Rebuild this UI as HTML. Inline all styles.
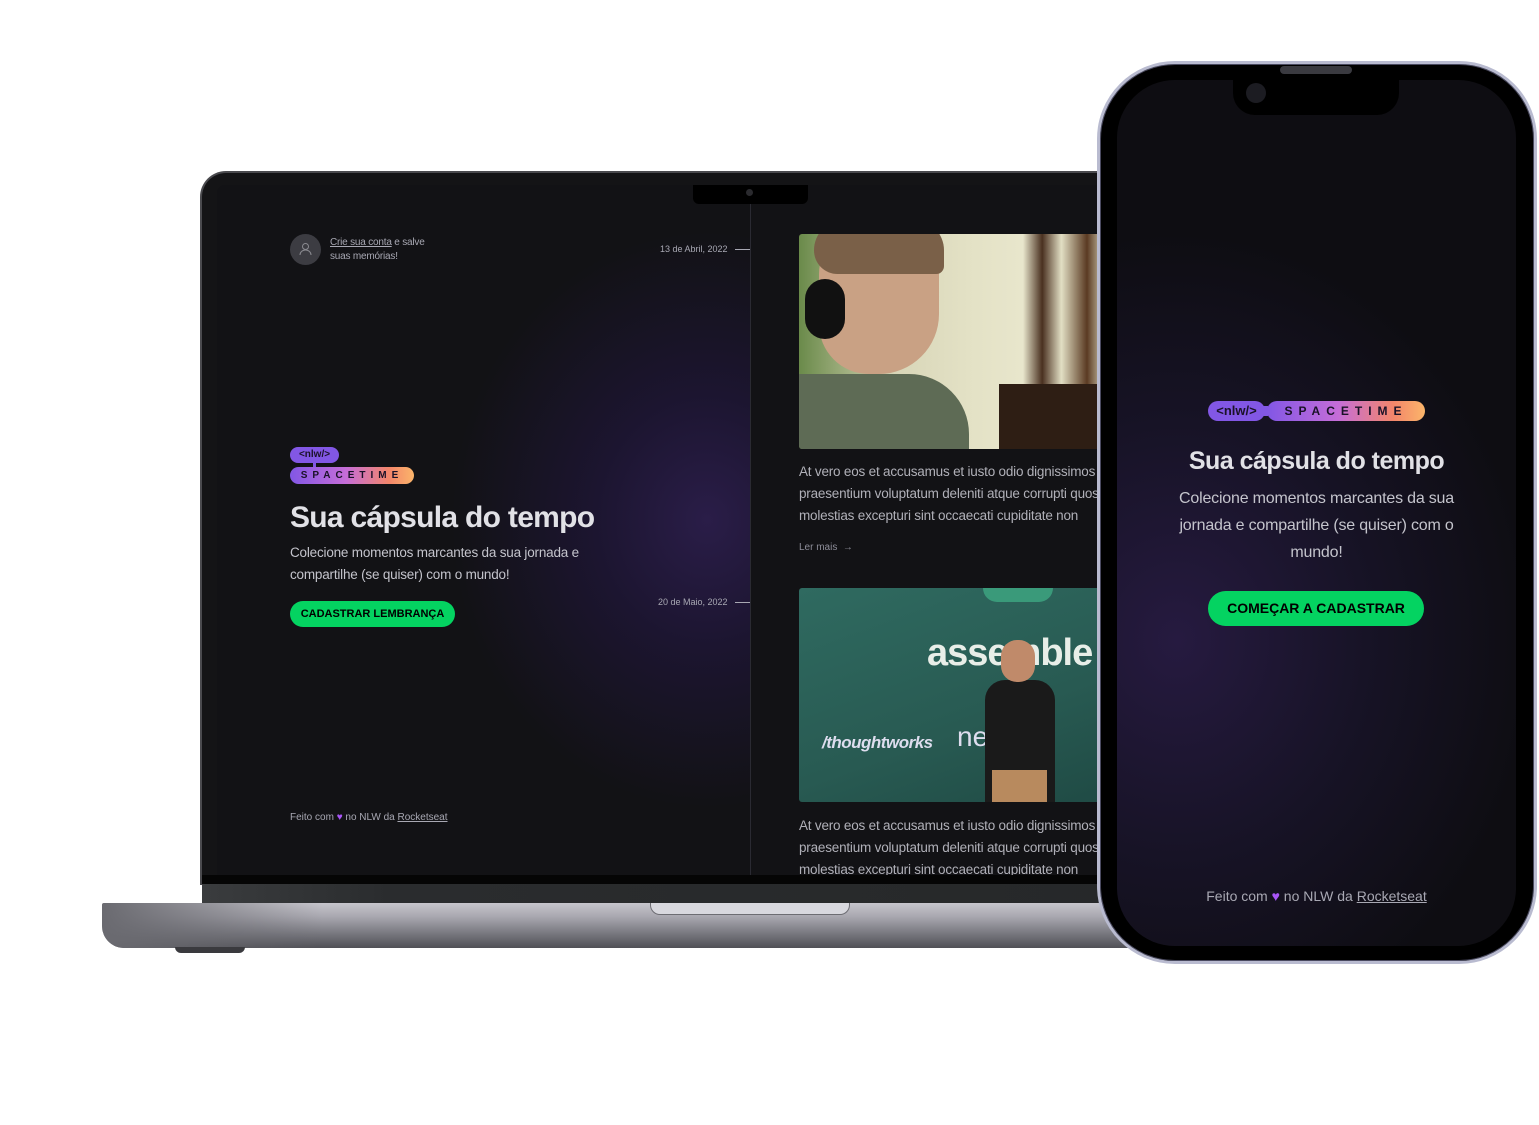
<!DOCTYPE html>
<html><head><meta charset="utf-8"><style>
*{margin:0;padding:0;box-sizing:border-box}
body{width:1539px;height:1125px;background:#fff;position:relative;overflow:hidden;font-family:"Liberation Sans",sans-serif}
.abs{position:absolute}
.logo1{background:#8257e5;color:#1a1228;border-radius:9px;font-weight:bold;text-align:center}
.logo2{background:linear-gradient(90deg,#8257e5,#c56dd8 45%,#f3866a 80%,#fbb56a);color:#1a1228;border-radius:9px;font-weight:bold;text-align:center}
.t{color:#e1e1e6}
.g{color:#a8a8b3}
</style></head><body>

<div class="abs" style="left:200px;top:171px;width:940px;height:714px;background:#141416;border-radius:26px 26px 0 0;border:2px solid #4a4a4e;border-bottom:none"></div>
<div class="abs" style="left:217px;top:185px;width:900px;height:690px;background:#121215;overflow:hidden;border-radius:8px 0 0 0">
  <div class="abs" style="left:0;top:0;width:533px;height:690px;background:radial-gradient(ellipse 320px 360px at 490px 335px,#2a1d48 0%,#1c1530 35%,#121215 80%)"></div>
  <div class="abs" style="left:533px;top:0;width:1px;height:690px;background:#2a2a32"></div>
  <div class="abs" style="left:476px;top:0;width:115px;height:19px;background:#000;border-radius:0 0 6px 6px"></div>
  <div class="abs" style="left:529px;top:4px;width:7px;height:7px;background:#2a2a2e;border-radius:50%"></div>
  <div class="abs" style="left:73px;top:49px;width:31px;height:31px;border-radius:50%;background:#3c3c42"></div>
  <svg class="abs" style="left:82px;top:57px" width="13" height="14" viewBox="0 0 13 14"><circle cx="6.5" cy="4.5" r="3" fill="none" stroke="#8a8a90" stroke-width="1"/><path d="M1 13c0-3 2.5-5 5.5-5s5.5 2 5.5 5" fill="none" stroke="#8a8a90" stroke-width="1"/></svg>
  <div class="abs g" style="left:113px;top:51px;font-size:10px;line-height:14px;letter-spacing:-0.2px"><u>Crie sua conta</u> e salve<br>suas memórias!</div>
  <div class="abs g" style="left:443px;top:59px;font-size:9px">13 de Abril, 2022</div>
  <div class="abs" style="left:518px;top:64px;width:15px;height:1px;background:#a8a8b3"></div>
  <div class="abs g" style="left:441px;top:412px;font-size:9px">20 de Maio, 2022</div>
  <div class="abs" style="left:518px;top:417px;width:15px;height:1px;background:#a8a8b3"></div>
  <div class="abs logo1" style="left:73px;top:262px;width:49px;height:16px;font-size:10px;line-height:16px">&lt;nlw/&gt;</div>
  <div class="abs" style="left:96px;top:277px;width:3px;height:5px;background:#8257e5"></div>
  <div class="abs logo2" style="left:73px;top:282px;width:124px;height:17px;font-size:10px;line-height:17px;letter-spacing:5px">SPACETIME</div>
  <div class="abs t" style="left:73px;top:316px;font-size:30px;font-weight:bold;letter-spacing:-0.7px">Sua cápsula do tempo</div>
  <div class="abs g" style="left:73px;top:357px;font-size:13.5px;line-height:22px;color:#c4c4cc;letter-spacing:-0.2px">Colecione momentos marcantes da sua jornada e<br>compartilhe (se quiser) com o mundo!</div>
  <div class="abs" style="left:73px;top:416px;width:165px;height:26px;background:#04d361;border-radius:13px;color:#000;font-size:11px;font-weight:bold;text-align:center;line-height:26px">CADASTRAR LEMBRANÇA</div>
  <div class="abs g" style="left:73px;top:627px;font-size:10px">Feito com <span style="color:#a855f7">♥</span> no NLW da <u>Rocketseat</u></div>
  <!-- photo 1 -->
  <div class="abs" style="left:582px;top:49px;width:320px;height:215px;border-radius:3px;overflow:hidden;background:linear-gradient(90deg,#6a8a4a 0%,#d8d6b8 30%,#e4e2c6 55%,#e8e6cc 70%,#4a3020 76%,#e2dfc4 82%,#5a3a22 90%,#e2dfc4 96%)">
    <div class="abs" style="left:0;top:140px;width:170px;height:80px;background:#5e6b55;border-radius:0 60px 0 0"></div>
    <div class="abs" style="left:20px;top:-10px;width:120px;height:150px;background:#c9a184;border-radius:50px 40px 60px 50px"></div>
    <div class="abs" style="left:15px;top:-15px;width:130px;height:55px;background:#7a6048;border-radius:40px 40px 10px 30px"></div>
    <div class="abs" style="left:6px;top:45px;width:40px;height:60px;background:#111;border-radius:20px"></div>
    <div class="abs" style="left:200px;top:150px;width:120px;height:70px;background:#2e1e14"></div>
  </div>
  <div class="abs g" style="left:582px;top:276px;font-size:13.5px;line-height:22px;white-space:nowrap;color:#b0b0b8;letter-spacing:-0.2px">At vero eos et accusamus et iusto odio dignissimos<br>praesentium voluptatum deleniti atque corrupti quos<br>molestias excepturi sint occaecati cupiditate non</div>
  <div class="abs g" style="left:582px;top:357px;font-size:10px;color:#8d8d99">Ler mais &nbsp;→</div>
  <div class="abs" style="left:582px;top:403px;width:320px;height:214px;border-radius:3px;background:linear-gradient(160deg,#2f6a60,#285a52 60%,#1f4a44)"></div>
  <div class="abs" style="left:766px;top:403px;width:70px;height:14px;background:#3a9a7a;border-radius:0 0 35px 35px"></div>
  <div class="abs" style="left:710px;top:447px;font-size:38px;font-weight:bold;color:#e8eee8;letter-spacing:-1px">assemble</div>
  <div class="abs" style="left:605px;top:548px;font-size:17px;font-weight:bold;color:#dde;letter-spacing:-0.5px;font-style:italic">/thoughtworks</div>
  <div class="abs" style="left:740px;top:536px;font-size:28px;color:#dde">ne</div>
  <div class="abs" style="left:768px;top:495px;width:70px;height:122px;background:#1a1a1a;border-radius:20px 20px 0 0"></div>
  <div class="abs" style="left:784px;top:455px;width:34px;height:42px;background:#c08a6a;border-radius:16px"></div>
  <div class="abs" style="left:775px;top:585px;width:55px;height:32px;background:#b88a5e"></div>
  <div class="abs g" style="left:582px;top:630px;font-size:13.5px;line-height:22px;white-space:nowrap;color:#b0b0b8;letter-spacing:-0.2px">At vero eos et accusamus et iusto odio dignissimos<br>praesentium voluptatum deleniti atque corrupti quos<br>molestias excepturi sint occaecati cupiditate non</div>
</div>
<div class="abs" style="left:202px;top:875px;width:940px;height:9px;background:#050505"></div>
<div class="abs" style="left:202px;top:884px;width:940px;height:20px;background:linear-gradient(90deg,#3a3c3e,#2a2c2e 20%,#262829)"></div>
<div class="abs" style="left:102px;top:903px;width:1040px;height:45px;border-radius:2px 0 0 22px;background:linear-gradient(180deg,#c6c5cc 0%,#a9a8b0 30%,#75757c 70%,#505056 100%)"></div>
<div class="abs" style="left:102px;top:903px;width:220px;height:45px;border-radius:2px 0 0 22px;background:linear-gradient(90deg,#6a6a70,rgba(180,180,190,0))"></div>
<div class="abs" style="left:650px;top:903px;width:200px;height:12px;background:#d8d8de;border-radius:0 0 10px 10px;border:1px solid #6c6c72;border-top:none"></div>
<div class="abs" style="left:175px;top:947px;width:70px;height:6px;background:#3a3a3e;border-radius:0 0 6px 6px"></div>

<div class="abs" style="left:1097px;top:61px;width:440px;height:903px;border-radius:78px;background:#000;border:3px solid #b9bbd0;box-shadow:inset 0 0 0 1px #4a4a60"></div>
<div class="abs" style="left:1117px;top:80px;width:399px;height:866px;border-radius:58px;overflow:hidden;background:radial-gradient(ellipse 420px 480px at 60px 560px,#261a40 0%,#171326 45%,#0e0d12 85%)">
  <div class="abs" style="left:116px;top:0;width:166px;height:35px;background:#000;border-radius:0 0 22px 22px"></div>
  <div class="abs" style="left:129px;top:3px;width:20px;height:20px;background:#1c1c22;border-radius:50%"></div>
  <div class="abs logo1" style="left:91px;top:321px;width:57px;height:20px;font-size:13px;line-height:20px;border-radius:10px">&lt;nlw/&gt;</div>
  <div class="abs" style="left:145px;top:326px;width:6px;height:10px;background:#8257e5"></div>
  <div class="abs logo2" style="left:150px;top:321px;width:158px;height:20px;font-size:12px;line-height:20px;letter-spacing:6px;border-radius:10px">SPACETIME</div>
  <div class="abs t" style="left:0;top:367px;width:399px;text-align:center;font-size:25px;font-weight:bold;letter-spacing:-0.5px">Sua cápsula do tempo</div>
  <div class="abs" style="left:40px;top:405px;width:319px;text-align:center;font-size:16px;line-height:27px;color:#c4c4cc;letter-spacing:-0.2px">Colecione momentos marcantes da sua jornada e compartilhe (se quiser) com o mundo!</div>
  <div class="abs" style="left:91px;top:511px;width:216px;height:35px;background:#04d361;border-radius:18px;color:#000;font-size:14px;font-weight:bold;text-align:center;line-height:35px">COMEÇAR A CADASTRAR</div>
  <div class="abs g" style="left:0;top:808px;width:399px;text-align:center;font-size:14px">Feito com <span style="color:#a855f7">♥</span> no NLW da <u>Rocketseat</u></div>
</div>
<div class="abs" style="left:1280px;top:66px;width:72px;height:8px;background:#3a3a40;border-radius:4px"></div>
</body></html>
